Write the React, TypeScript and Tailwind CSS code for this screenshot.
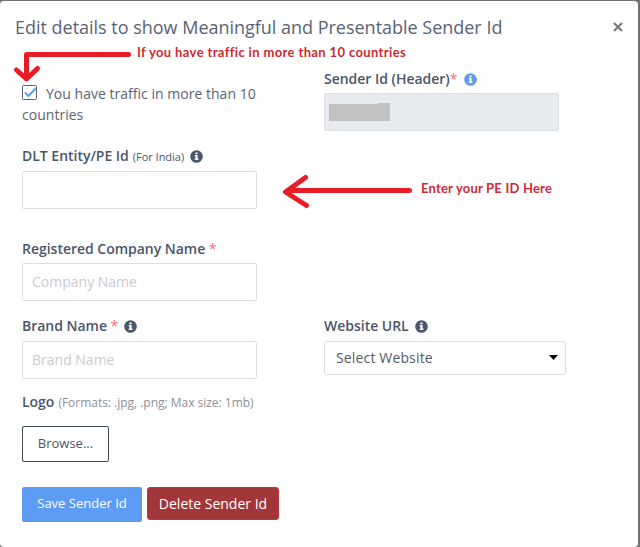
import type { ReactNode } from "react";

function InfoIcon({ className }: { className: string }) {
  return (
    <svg viewBox="0 0 13 13" className={`h-[13px] w-[13px] shrink-0 ${className}`} aria-hidden="true">
      <circle cx="6.5" cy="6.5" r="6.3" fill="currentColor" />
      <path d="M5.4 2.5h2.2v1.8H5.4zM4.7 5.1h2.9v3.5h.8v1.4H4.7V8.600h.8V6.500h-.8z" fill="#fff" />
    </svg>
  );
}

function Label({ children }: { children: ReactNode }) {
  return (
    <div className="flex h-5 items-center text-[14px] leading-5 font-semibold tracking-[-0.02px] whitespace-nowrap text-[#4b566b]">
      {children}
    </div>
  );
}

function Required() {
  return <span className="font-normal text-[#ff6b6b]">*</span>;
}

const inputClass =
  "block h-[38px] w-[235px] rounded-[2px] border border-[#dddfe2] bg-white px-[9px] pb-[2px] text-[14px] text-[#4b566b] placeholder:text-[#c9ccd2] outline-none";

export default function App() {
  return (
    <div className="h-[547px] w-[640px] overflow-hidden bg-[#737375] pt-px pr-[2px] font-['Open_Sans',sans-serif]">
      <main className="relative h-[546px] rounded-[4px] bg-white">
        <header className="flex h-[68px] items-start justify-between pt-[13px] pr-[15px] pl-[15px]">
          <h1 className="text-[18px] leading-[26px] tracking-[-0.015px] whitespace-nowrap text-[#5a6375]">
            Edit details to show Meaningful and Presentable Sender Id
          </h1>
          <button aria-label="Close" className="mt-[8px] h-[10px] w-[10px]">
            <svg viewBox="0 0 10 10" className="h-[10px] w-[10px]">
              <path d="M1 1 9 9M9 1 1 9" stroke="#777" strokeWidth="2.1" />
            </svg>
          </button>
        </header>

        <form className="pl-[22px]">
          <div className="grid h-[77px] grid-cols-[302px_1fr]">
            <label className="block w-[245px] pt-[14px] text-[14px] leading-[21px] tracking-[0.02px] text-[#5a6375]">
              <span className="mr-[9px] inline-block h-[15px] w-[15px] align-[-1px]">
                <svg viewBox="0 0 15 15" className="block h-[15px] w-[15px]">
                  <rect x="0.5" y="0.5" width="14" height="14" rx="1" fill="#fff" stroke="#5b6472" />
                  <path d="M3 7.3 6.3 11 14.200 3" fill="none" stroke="#5d9cf5" strokeWidth="1.9" />
                </svg>
              </span>
              You have traffic in more than 10 countries
            </label>
            <div>
              <Label>
                Sender Id (Header)<Required />
                <InfoIcon className="ml-[6px] text-[#5d9cf5]" />
              </Label>
              <div className="mt-1 flex h-[38px] w-[235px] items-start rounded-[2px] border border-[#dce0e3] bg-[#e8ebee] pt-[9px] pl-[4px]">
                <span className="mt-px h-[17px] w-[49px] bg-[#c2c2c2]" />
                <span className="h-[18px] w-[12px] bg-[#c2c2c2]" />
              </div>
            </div>
          </div>

          <div className="h-[93px]">
            <Label>
              DLT Entity/PE Id
              <span className="mt-px ml-[4px] text-[11px] font-normal">(For India)</span>
              <InfoIcon className="ml-[6px]" />
            </Label>
            <input className={`mt-[5px] ${inputClass}`} />
          </div>

          <div className="h-[77px]">
            <Label>
              Registered Company Name&nbsp;
              <Required />
            </Label>
            <input className={`mt-1 ${inputClass}`} placeholder="Company Name" />
          </div>

          <div className="grid h-[76px] grid-cols-[302px_1fr]">
            <div>
              <Label>
                Brand Name&nbsp;
                <Required />
                <InfoIcon className="ml-[6px]" />
              </Label>
              <input className={`mt-[5px] ${inputClass}`} placeholder="Brand Name" />
            </div>
            <div>
              <Label>
                Website URL
                <InfoIcon className="ml-[6px]" />
              </Label>
              <div className="mt-[5px] flex h-[34px] w-[242px] items-center justify-between rounded-[3px] border border-[#dddfe2] pr-[7px] pb-[2px] pl-[11px] text-[14px] tracking-[0.15px] text-[#555b65]">
                <span>Select Website</span>
                <svg viewBox="0 0 9 5" className="h-[5px] w-[9px]">
                  <path d="M0 0h9L4.5 5z" fill="#000" />
                </svg>
              </div>
            </div>
          </div>

          <Label>
            Logo
            <span className="mt-px ml-[4px] text-[12px] font-normal tracking-[-0.02px] text-[#8c8f96]">
              (Formats: .jpg, .png; Max size: 1mb)
            </span>
          </Label>
          <button
            type="button"
            className="mt-[14px] block h-[36px] w-[87px] rounded-[2px] border border-[#414b5e] text-[13px] text-[#4b566b]"
          >
            Browse...
          </button>

          <div className="mt-[25px] flex items-start gap-[5px] whitespace-nowrap">
            <button type="button" className="h-[35px] w-[120px] rounded-[2px] bg-[#5d9cf5] pb-[2px] text-[13px] text-white">
              Save Sender Id
            </button>
            <button
              type="button"
              className="h-[33px] w-[132px] rounded-[3px] border border-[#bd3543] bg-[#a23639] text-[14px] text-white"
            >
              Delete Sender Id
            </button>
          </div>
        </form>

        <div className="pointer-events-none absolute inset-0 text-[13px] leading-4 font-bold whitespace-nowrap text-[#cf2a31] font-['Lato',sans-serif]">
          <svg
            viewBox="0 1 638 546"
            className="absolute inset-0 h-[546px] w-[638px]"
            fill="none"
            stroke="#e81c24"
            strokeWidth="5"
            strokeLinecap="round"
            strokeLinejoin="round"
          >
            <path d="M128.5 54.5H26.5V77M16.5 70 26.5 79 37.5 68.5" />
            <path d="M409.500 190.500H289M305.500 177.500 285.500 192 306.500 205.500" />
          </svg>
          <span className="absolute top-[43px] left-[137px] tracking-[0.37px]">If you have traffic in more than 10 countries</span>
          <span className="absolute top-[179px] left-[421px] tracking-[0.2px]">Enter your PE ID Here</span>
        </div>
      </main>
    </div>
  );
}
